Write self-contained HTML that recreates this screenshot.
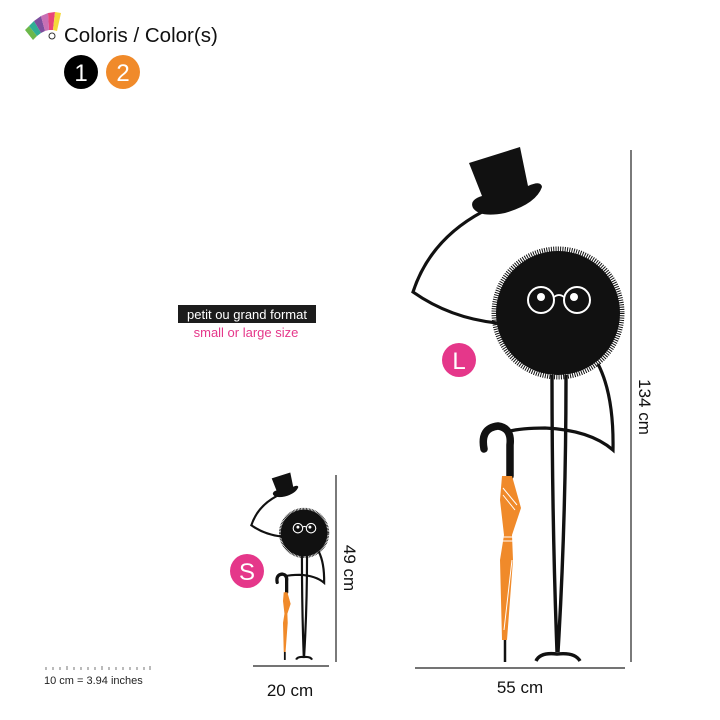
<!DOCTYPE html>
<html><head><meta charset="utf-8"><style>
html,body{margin:0;padding:0;background:#fff;width:720px;height:720px;overflow:hidden;font-family:"Liberation Sans",sans-serif}
</style></head><body>
<svg width="720" height="720" viewBox="0 0 720 720" xmlns="http://www.w3.org/2000/svg" style="position:absolute;left:0;top:0">
<!-- large figure -->
<g>
 <path d="M469,163 L520,147 L528,186 Q541,180 542,187 Q536,204 505,213 Q480,218 473,208 Q469,200 482,196 Z" fill="#111"/>
 <path d="M482,212 Q430,240 413,292 Q450,318 497,323" fill="none" stroke="#111" stroke-width="3.2"/>
 <circle cx="558" cy="313" r="62" fill="#111"/>
 <circle cx="558" cy="313" r="64" fill="none" stroke="#111" stroke-width="5" stroke-dasharray="1 1.3"/>
 <circle cx="541" cy="300" r="13" fill="none" stroke="#fff" stroke-width="2"/>
 <circle cx="577" cy="300" r="13" fill="none" stroke="#fff" stroke-width="2"/>
 <path d="M554,297 Q559,293 564,297" fill="none" stroke="#fff" stroke-width="1.6"/>
 <circle cx="541" cy="297" r="4" fill="#fff"/>
 <circle cx="574" cy="297" r="4" fill="#fff"/>
 <path d="M552,375 Q552,520 557,652 M566,375 Q566,520 558,652" fill="none" stroke="#111" stroke-width="3.4"/>
 <path d="M536,661 Q540,652 557,654 Q575,652 580,661" fill="none" stroke="#111" stroke-width="3.4"/>
 <path d="M598,364 Q614,395 613,450 Q590,430 545,428 Q520,428 506,432" fill="none" stroke="#111" stroke-width="3.2"/>
 <path d="M484,449 Q480,428 498,426 Q512,428 510,445 L510,476" fill="none" stroke="#111" stroke-width="7.5" stroke-linecap="round"/>
 <path d="M502,476 L512,476 L521,508 L512,535 L513,560 L507,640 L502,640 L500,560 L504,535 L500,500 Z" fill="#f08a2a"/>
 <path d="M503,488 L517,505 M503,495 L515,510 M502,537 L513,537 M503,541 L513,541 M512,560 L504,630" fill="none" stroke="#fff" stroke-width="1"/>
 <path d="M505,640 L505,662" stroke="#111" stroke-width="2.5"/>
</g>
<!-- small figure -->
<g transform="translate(101,419) scale(0.364)">
 <path d="M469,163 L520,147 L528,186 Q541,180 542,187 Q536,204 505,213 Q480,218 473,208 Q469,200 482,196 Z" fill="#111"/>
 <path d="M482,212 Q430,240 413,292 Q450,318 497,323" fill="none" stroke="#111" stroke-width="6"/>
 <circle cx="558" cy="313" r="64" fill="#111"/>
 <circle cx="558" cy="313" r="66" fill="none" stroke="#111" stroke-width="6" stroke-dasharray="2 2"/>
 <circle cx="541" cy="300" r="13" fill="none" stroke="#fff" stroke-width="3"/>
 <circle cx="577" cy="300" r="13" fill="none" stroke="#fff" stroke-width="3"/>
 <path d="M554,297 Q559,293 564,297" fill="none" stroke="#fff" stroke-width="3"/>
 <circle cx="541" cy="297" r="4" fill="#fff"/>
 <circle cx="574" cy="297" r="4" fill="#fff"/>
 <path d="M552,375 Q552,520 557,652 M566,375 Q566,520 558,652" fill="none" stroke="#111" stroke-width="6"/>
 <path d="M536,661 Q540,652 557,654 Q575,652 580,661" fill="none" stroke="#111" stroke-width="6"/>
 <path d="M598,364 Q614,395 613,450 Q590,430 545,428 Q520,428 506,432" fill="none" stroke="#111" stroke-width="6"/>
 <path d="M484,449 Q480,428 498,426 Q512,428 510,445 L510,476" fill="none" stroke="#111" stroke-width="9" stroke-linecap="round"/>
 <path d="M502,476 L512,476 L521,508 L512,535 L513,560 L507,640 L502,640 L500,560 L504,535 L500,500 Z" fill="#f08a2a"/>
 <path d="M505,640 L505,662" stroke="#111" stroke-width="5"/>
</g>

<path d="M631,150 V662 M415,668 H625 M336,475 V662 M253,666 H329" stroke="#222" stroke-width="1.2"/>
<text x="520" y="693" font-size="17" text-anchor="middle" fill="#111">55 cm</text>
<text x="290" y="696" font-size="17" text-anchor="middle" fill="#111">20 cm</text>
<text transform="translate(639,407) rotate(90)" font-size="17" text-anchor="middle" fill="#111">134 cm</text>
<text transform="translate(344,568) rotate(90)" font-size="17" text-anchor="middle" fill="#111">49 cm</text>

<circle cx="459" cy="360" r="17" fill="#e5378a"/>
<text x="459" y="369" font-size="24" text-anchor="middle" fill="#fff">L</text>
<circle cx="247" cy="571" r="17" fill="#e5378a"/>
<text x="247" y="580" font-size="24" text-anchor="middle" fill="#fff">S</text>

<rect x="178" y="305" width="138" height="18" fill="#1c1c1c"/>
<text x="247" y="319" font-size="13" text-anchor="middle" fill="#fff">petit ou grand format</text>
<text x="246" y="337" font-size="13" text-anchor="middle" fill="#e5378a">small or large size</text>

<path d="M46,667v3M53,667v3M60,667v3M67,666v4M74,667v3M81,667v3M88,667v3M95,667v3M102,666v4M109,667v3M116,667v3M123,667v3M130,667v3M137,667v3M144,667v3M150,666v4" stroke="#555" stroke-width="0.8"/>
<text x="44" y="684" font-size="11" fill="#222">10 cm = 3.94 inches</text>

<!-- swatch fan -->
<g>
 <path d="M25,30 L33,40 L37,36 L29,26 Z" fill="#6cb84a"/>
 <path d="M29,26 L37,36 L41,33 L34,21 Z" fill="#2fae94"/>
 <path d="M34,21 L41,33 L45,31 L41,16 Z" fill="#7d4f9e"/>
 <path d="M41,16 L45,31 L49,30 L48,13 Z" fill="#c86fb4"/>
 <path d="M48,13 L49,30 L53,30 L55,12 Z" fill="#e8457a"/>
 <path d="M55,12 L53,30 L57,31 L61,13 Z" fill="#f5d93a"/>
 <circle cx="52" cy="36" r="3" fill="#fff" stroke="#333" stroke-width="1"/>
</g>
<text x="64" y="42" font-size="20.5" fill="#111">Coloris / Color(s)</text>
<circle cx="81" cy="72" r="17" fill="#000"/>
<text x="81" y="81" font-size="24" text-anchor="middle" fill="#fff">1</text>
<circle cx="123" cy="72" r="17" fill="#f08a2a"/>
<text x="123" y="81" font-size="24" text-anchor="middle" fill="#fff">2</text>
</svg>
</body></html>
